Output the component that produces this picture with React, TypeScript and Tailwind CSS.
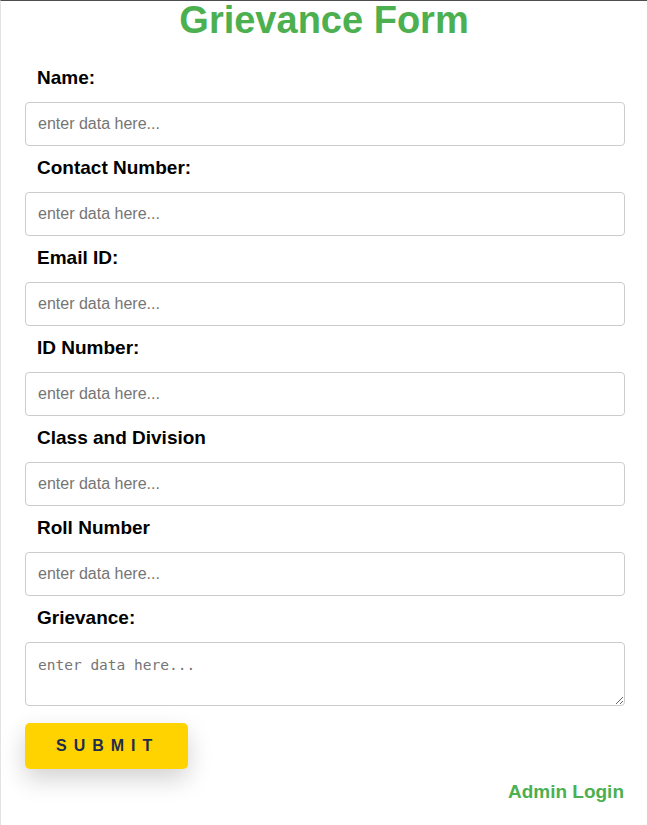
import React from "react";

const fields = [
  "Name:",
  "Contact Number:",
  "Email ID:",
  "ID Number:",
  "Class and Division",
  "Roll Number",
];

export default function App() {
  return (
    <div
      className="min-h-[825px] w-[647px] border-t border-l border-t-[#4d4d4d] border-l-[#e3e3e3] bg-white"
      style={{ fontFamily: '"Liberation Sans", Arial, sans-serif' }}
    >
      <h1 className="text-center text-[38px] leading-[38px] font-bold text-[#4caf50]">
        Grievance Form
      </h1>
      <form className="ml-[24px] w-[600px] pt-[28px]" onSubmit={(e) => e.preventDefault()}>
        {fields.map((f, i) => (
          <div key={f} className={i === 0 ? "" : "mt-[11px]"}>
            <label className="block pl-[12px] text-[19px] leading-[22px] font-bold text-black">
              {f}
            </label>
            <input
              type="text"
              placeholder="enter data here..."
              className="mt-[13px] block h-[44px] w-[600px] rounded-[4px] border border-[#cccccc] bg-white px-[12px] text-[16px] text-black placeholder:text-[#757575] outline-none"
            />
          </div>
        ))}
        <div className="mt-[11px]">
          <label className="block pl-[12px] text-[19px] leading-[22px] font-bold text-black">
            Grievance:
          </label>
          <textarea
            placeholder="enter data here..."
            className="mt-[13px] block h-[64px] w-[600px] rounded-[4px] border border-[#cccccc] bg-white px-[12px] pt-[13px] pb-[8px] text-[14.5px] leading-[18px] text-black placeholder:text-[#757575] outline-none"
            style={{ fontFamily: '"DejaVu Sans Mono", monospace' }}
          />
        </div>
        <button
          type="submit"
          className="mt-[17px] block h-[46px] w-[163px] rounded-[5px] bg-[#ffd300] pl-[31px] text-left text-[16px] font-bold tracking-[7px] text-[#1f2d4d] shadow-[0_10px_24px_rgba(0,0,0,0.18)]"
        >
          SUBMIT
        </button>
        <div className="mt-[12px] text-right text-[19px] leading-[22px] font-bold text-[#4caf50] pr-px">
          Admin Login
        </div>
      </form>
    </div>
  );
}
